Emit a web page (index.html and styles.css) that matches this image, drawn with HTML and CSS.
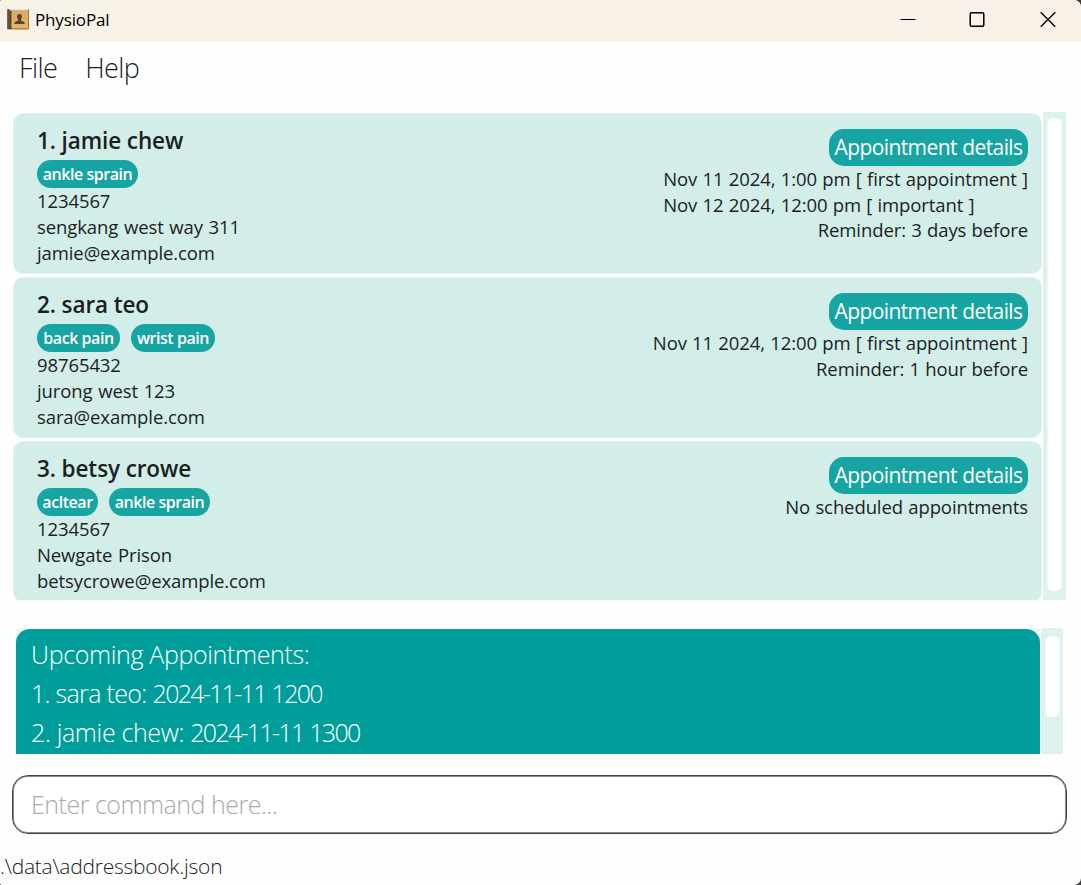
FILE: index.html
```html
<!DOCTYPE html>
<html lang="en">
<head>
<meta charset="utf-8">
<title>PhysioPal</title>
<link rel="stylesheet" href="styles.css">
</head>
<body>
<header class="titlebar">
  <svg class="app-icon" width="22" height="21" viewBox="0 0 22 21">
    <defs><linearGradient id="cover" x1="0" y1="0" x2="0" y2="1"><stop offset="0" stop-color="#d9aa61"/><stop offset="1" stop-color="#e5b765"/></linearGradient></defs>
    <rect x="0" y="0" width="22" height="20.5" rx="1" fill="#a8783b"/>
    <rect x="0.5" y="0.5" width="4" height="19.5" fill="#62503f"/>
    <rect x="3.5" y="1" width="1" height="19" fill="#3f3a35"/>
    <rect x="4.5" y="1.8" width="16.5" height="17.4" fill="url(#cover)"/>
    <rect x="2.5" y="0" width="18.5" height="1.5" fill="#f1e6d6"/>
    <path d="M12.500 5c1.800 0 2.600 1.200 2.500 2.800-.1 1.300-.6 2-1 2.600v1.200c.9.700 3.500.8 3.700 3.400H7.300c.2-2.600 2.800-2.700 3.700-3.400v-1.200c-.4-.6-.9-1.300-1-2.600C9.900 6.200 10.700 5 12.500 5z" fill="#584630"/>
  </svg>
  <span class="app-name">PhysioPal</span>
  <div class="window-buttons">
    <svg width="16" height="16" viewBox="0 0 16 16"><path d="M.5 8.500h15" /></svg>
    <svg width="16" height="16" viewBox="0 0 16 16"><rect class="maximize" x="1.200" y="1.700" width="13.600" height="13.600" rx="1.500"/></svg>
    <svg width="16" height="16" viewBox="0 0 16 16"><path class="close" d="M.7 1.200l14.600 14.600M15.300 1.200L.7 15.800"/></svg>
  </div>
</header>
<nav class="menu"><span>File</span><span>Help</span></nav>

<main class="patients">
  <div class="cards">
    <article class="card">
      <div class="info">
        <h2>1. jamie chew</h2>
        <div class="tags"><span class="tag w101">ankle sprain</span></div>
        <p>1234567</p><p>sengkang west way 311</p><p>jamie@example.com</p>
      </div>
      <div class="schedule">
        <span class="badge">Appointment details</span>
        <div class="dates"><p>Nov 11 2024, 1:00 pm [ first appointment ]</p><p>Nov 12 2024, 12:00 pm [ important ]</p></div>
        <p>Reminder: 3 days before</p>
      </div>
    </article>
    <article class="card">
      <div class="info">
        <h2>2. sara teo</h2>
        <div class="tags"><span class="tag w83">back pain</span><span class="tag w84">wrist pain</span></div>
        <p>98765432</p><p>jurong west 123</p><p>sara@example.com</p>
      </div>
      <div class="schedule">
        <span class="badge">Appointment details</span>
        <div class="dates"><p>Nov 11 2024, 12:00 pm [ first appointment ]</p></div>
        <p>Reminder: 1 hour before</p>
      </div>
    </article>
    <article class="card">
      <div class="info">
        <h2>3. betsy crowe</h2>
        <div class="tags"><span class="tag w61">acltear</span><span class="tag w101">ankle sprain</span></div>
        <p>1234567</p><p>Newgate Prison</p><p>betsycrowe@example.com</p>
      </div>
      <div class="schedule">
        <span class="badge">Appointment details</span>
        <p>No scheduled appointments</p>
      </div>
    </article>
  </div>
  <div class="track"><div class="thumb"></div></div>
</main>

<section class="result">
  <div class="result-back"><div class="result-text">
    <p>Upcoming Appointments:</p>
    <p><span class="tight">1. sara teo:</span> <span class="when">2024-11-11 1200</span></p>
    <p>2. jamie chew: <span class="when">2024-11-11 1300</span></p>
  </div></div>
  <div class="track"><div class="thumb"></div></div>
</section>

<input class="command" type="text" placeholder="Enter command here...">
<footer class="status">.\data\addressbook.json</footer>
</body>
</html>
```
FILE: styles.css
```css
* { box-sizing: border-box; }
html { background: #3a3a3a; }
body {
  margin: 0;
  width: 1081px;
  height: 885px;
  overflow: hidden;
  display: flex;
  flex-direction: column;
  border-radius: 2px 7px 7px 2px;
  background: #fefefe;
  color: #1a1f1f;
  font-family: "Open Sans", "Noto Sans", sans-serif;
}
p, h2 { margin: 0; white-space: nowrap; }

.titlebar {
  height: 42px;
  flex: none;
  display: flex;
  align-items: flex-start;
  padding: 9px 25px 0 7px;
  background: linear-gradient(90deg, #f6f2e7, #f9f1e7 25%, #f9f1e7);
  color: #000;
}
.app-name { margin-left: 6px; font-size: 17px; line-height: 21px; letter-spacing: -0.15px; }
.window-buttons { margin: 2px 0 0 auto; display: flex; gap: 55px; }
.window-buttons svg { fill: none; stroke: #000; stroke-width: 1; }
.window-buttons svg:first-child { margin-right: -2px; }
.window-buttons .maximize { stroke-width: 1.5; }
.window-buttons .close { stroke-width: 1.3; }

.menu {
  height: 70px;
  flex: none;
  padding: 8px 19px;
  display: flex;
  gap: 28px;
  font-size: 27px;
  line-height: 36px;
  font-weight: 300;
  letter-spacing: -0.6px;
}

.patients { height: 488px; flex: none; display: flex; padding-left: 13px; gap: 1px; }
.cards { width: 1029px; padding-top: 1px; overflow: hidden; display: flex; flex-direction: column; gap: 3px; }
.card {
  height: 161px;
  flex: none;
  display: flex;
  justify-content: space-between;
  padding: 12px 14px 0 24px;
  border: 1px solid #e3f3f0;
  border-radius: 10px;
  background: #d3ede9;
  font-size: 18.500px;
  line-height: 26px;
  letter-spacing: -0.1px;
  word-spacing: 1px;
}
.card .info, .card .schedule { margin-left: -1px; margin-right: -1px; }
.card h2 { font-size: 22.500px; line-height: 30px; font-weight: 600; letter-spacing: -0.1px; word-spacing: 0; }
.tags { display: flex; gap: 11px; margin: 4px 0 0; }
.tag {
  height: 28px;
  border-radius: 14px;
  background: #17a5a3;
  color: #fff;
  font-size: 16px;
  font-weight: 600;
  line-height: 28px;
  letter-spacing: -0.45px;
  word-spacing: 0;
  text-align: center;
  white-space: nowrap;
}
.w101 { width: 101px; }
.w83 { width: 83px; }
.w84 { width: 84px; }
.w61 { width: 61px; }
.schedule { display: flex; flex-direction: column; align-items: flex-end; padding-top: 3px; word-spacing: 0.6px; }
.badge {
  width: 199px;
  height: 37px;
  border-radius: 15px;
  background: #17a5a3;
  color: #fff;
  font-size: 21px;
  line-height: 37px;
  letter-spacing: -0.6px;
  text-align: center;
  white-space: nowrap;
}
.dates p + p { line-height: 25px; }

.track { background: #dff1ee; }
.thumb { background: #fff; border: 1px solid #f2faf9; border-radius: 5px; }
.patients .track { width: 23px; padding: 6px 4px 0; }
.patients .thumb { height: 473px; }

.result { height: 126px; flex: none; display: flex; gap: 1px; margin: 28px 0 0 16px; }
.result-back { width: 1024px; height: 125px; margin-top: 1px; background: #f1f1f1; }
.result-text {
  height: 100%;
  padding: 6px 15px;
  border-radius: 14px 14px 0 0;
  background: #009e9b;
  color: #fff;
  font-size: 25px;
  line-height: 39px;
  font-weight: 300;
  letter-spacing: -0.35px;
}
.tight { letter-spacing: -0.7px; }
.when { letter-spacing: -1.700px; word-spacing: 1px; }
.result .track { width: 22px; padding: 8px 3px 0 4px; border-radius: 3px; }
.result .thumb { height: 81px; }

.command {
  width: 1055px;
  height: 59px;
  flex: none;
  margin: 21px 0 0 12px;
  padding: 0 18px 1px;
  border: 1px solid #424242;
  border-radius: 16px;
  box-shadow: inset 0 0 0 1px #8a8a8a;
  background: #fff;
  font: 300 25px/36px "Open Sans", "Noto Sans", sans-serif;
  letter-spacing: -0.5px;
}
.command::placeholder { color: #aaa; opacity: 1; }

.status { margin-top: 18px; font-size: 21px; line-height: 28px; letter-spacing: -0.250px; font-weight: 300; color: #222; white-space: nowrap; }
```
